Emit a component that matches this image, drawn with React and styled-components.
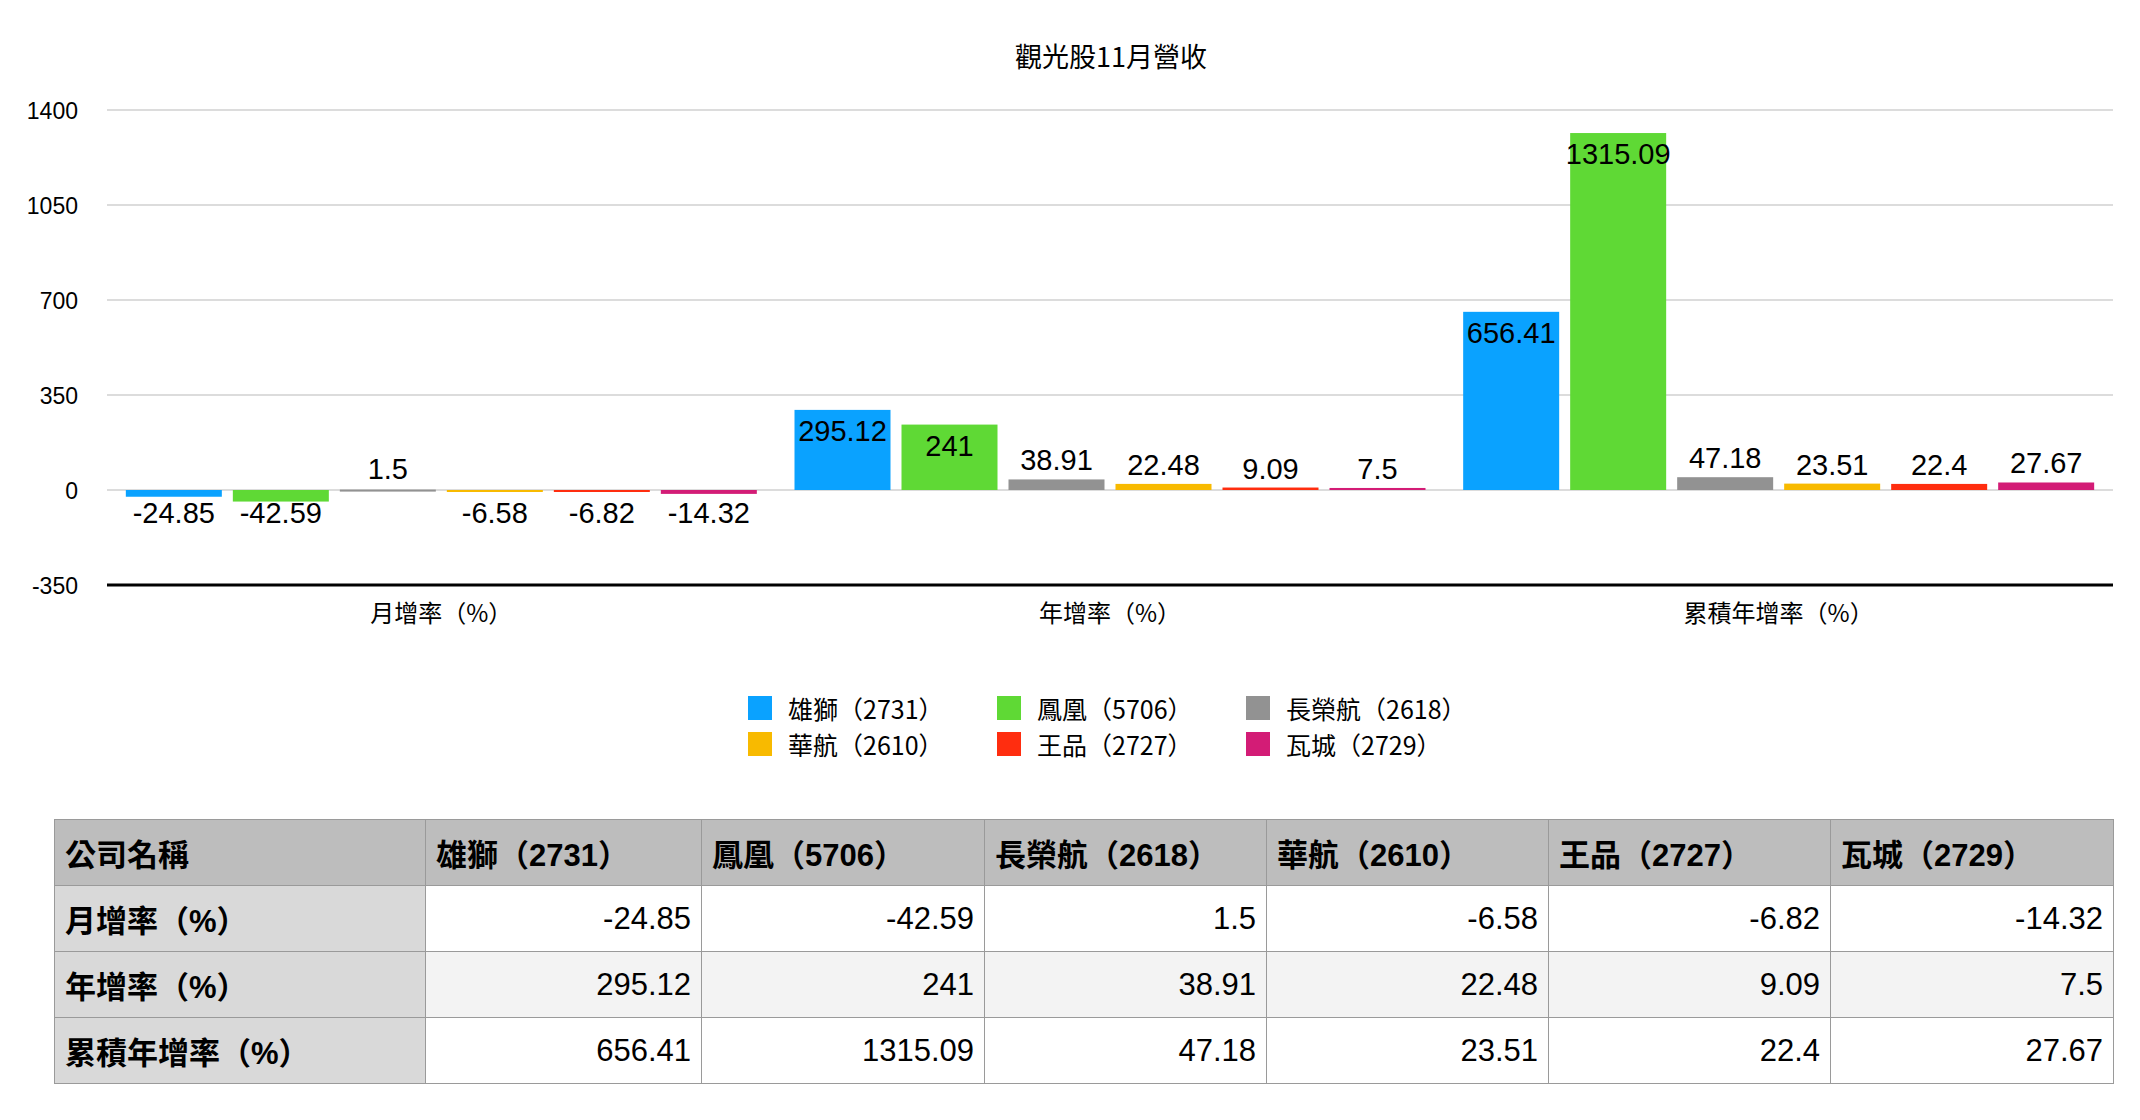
import React from "react";
import styled, { createGlobalStyle } from "styled-components";

const Global = createGlobalStyle`
  body { margin: 0; background: #fff; font-family: "Liberation Sans", "Noto Sans CJK TC", sans-serif; color: #000; }
`;

const Page = styled.div`
  width: 2140px; height: 1120px; position: relative; overflow: hidden;
`;
const ChartSvg = styled.svg`display: block;`;
const Legend = styled.div`
  display: grid; grid-template-columns: repeat(3, 249px);
  row-gap: 12px; margin-left: 748px; margin-top: 56px;
`;
const LegendItem = styled.div`
  display: flex; align-items: center; gap: 16px; font-size: 25px;
  font-family: "Noto Sans CJK TC", sans-serif; height: 24px;
`;
const Swatch = styled.span`
  width: 24px; height: 24px; background: ${p => p.$c}; flex: none;
`;
const Table = styled.div`
  position: absolute; left: 54px; top: 819px; width: 2059px;
  display: grid; grid-template-columns: 371px 276px 283px 282px 282px 282px 283px;
  border-left: 1px solid #9a9a9a; border-top: 1px solid #9a9a9a;
`;
const Cell = styled.div`
  height: 66px; box-sizing: border-box; border-right: 1px solid #9a9a9a; border-bottom: 1px solid #9a9a9a;
  display: flex; align-items: center; padding: 0 10px;
  font-size: 31px;
  font-family: "Liberation Sans", "Noto Sans CJK TC", sans-serif;
  justify-content: ${p => (p.$num ? "flex-end" : "flex-start")};
  font-weight: ${p => (p.$bold ? 700 : 400)};
  background: ${p => p.$bg};
`;

const colors = ["#0aa2ff", "#5fd935", "#929292", "#f8ba00", "#ff2d0f", "#d31c76"];
const names = ["雄獅（2731）", "鳳凰（5706）", "長榮航（2618）", "華航（2610）", "王品（2727）", "瓦城（2729）"];
const cats = ["月增率（%）", "年增率（%）", "累積年增率（%）"];
const data = [
  [-24.85, -42.59, 1.5, -6.58, -6.82, -14.32],
  [295.12, 241, 38.91, 22.48, 9.09, 7.5],
  [656.41, 1315.09, 47.18, 23.51, 22.4, 27.67],
];
const fmt = ["-24.85","-42.59","1.5","-6.58","-6.82","-14.32","295.12","241","38.91","22.48","9.09","7.5","656.41","1315.09","47.18","23.51","22.4","27.67"];

const L = 107, R = 2113, Y0 = 490, K = 95 / 350;
const y = v => Y0 - v * K;

function Chart() {
  const groupW = (R - L) / 3;
  return (
    <ChartSvg width="2140" height="640">
      <text x="1111" y="67" fontSize="27" textAnchor="middle" fontFamily='"Noto Sans CJK TC", sans-serif'>觀光股11月營收</text>
      {[1400, 1050, 700, 350, 0].map(t => (
        <g key={t}>
          <line x1={L} x2={R} y1={y(t)} y2={y(t)} stroke="#d0d0d0" strokeWidth="1.5" />
          <text x="78" y={y(t) + 9} fontSize="23" textAnchor="end">{t}</text>
        </g>
      ))}
      <text x="78" y={y(-350) + 9} fontSize="23" textAnchor="end">-350</text>
      <line x1={L} x2={R} y1={y(-350)} y2={y(-350)} stroke="#000" strokeWidth="3" />
      {data.map((g, gi) => {
        const start = L + gi * groupW + (groupW - (6 * 96 + 5 * 11)) / 2;
        return (
          <g key={gi}>
            {g.map((v, i) => {
              const x = start + i * 107;
              const top = Math.min(y(v), Y0), h = Math.max(Math.abs(v * K), 2);
              const label = fmt[gi * 6 + i];
              let ly;
              if (v < 0) ly = 523;
              else if (v * K > 40) ly = top + 31;
              else ly = Math.min(top, Y0 - 2) - 9;
              return (
                <g key={i}>
                  <rect x={x} y={v < 0 ? Y0 : top} width="96" height={h} fill={colors[i]} />
                  <text x={x + 48} y={ly} fontSize="29" textAnchor="middle">{label}</text>
                </g>
              );
            })}
            <text x={L + gi * groupW + groupW / 2} y="622" fontSize="24" textAnchor="middle"
              fontFamily='"Noto Sans CJK TC", sans-serif'>{cats[gi]}</text>
          </g>
        );
      })}
    </ChartSvg>
  );
}

export default function App() {
  const order = [0, 1, 2, 3, 4, 5];
  return (
    <Page>
      <Global />
      <Chart />
      <Legend>
        {order.map(i => (
          <LegendItem key={i}><Swatch $c={colors[i]} />{names[i]}</LegendItem>
        ))}
      </Legend>
      <Table>
        <Cell $bold $bg="#bdbdbd">公司名稱</Cell>
        {names.map(n => <Cell key={n} $bold $bg="#bdbdbd">{n}</Cell>)}
        {data.map((row, ri) => (
          <React.Fragment key={ri}>
            <Cell $bold $bg="#d9d9d9">{cats[ri]}</Cell>
            {row.map((v, i) => (
              <Cell key={i} $num $bg={ri === 1 ? "#f3f3f3" : "#fff"}>{fmt[ri * 6 + i]}</Cell>
            ))}
          </React.Fragment>
        ))}
      </Table>
    </Page>
  );
}
